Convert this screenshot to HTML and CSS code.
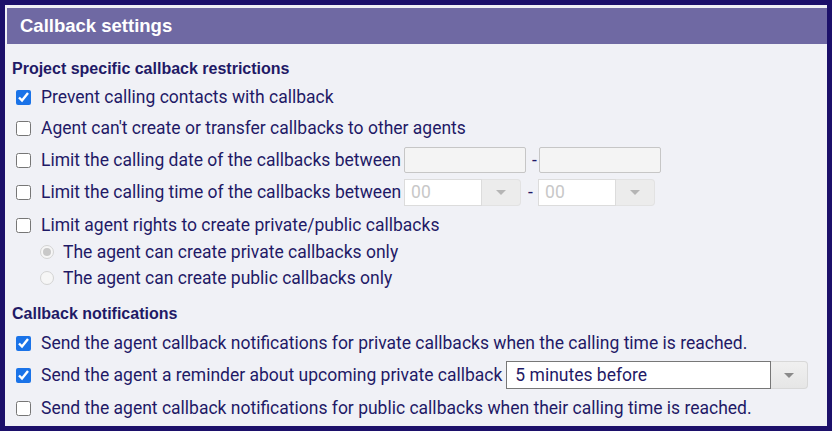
FILE: index.html
```html
<!DOCTYPE html>
<html>
<head>
<meta charset="utf-8">
<link rel="stylesheet" href="styles.css">
</head>
<body>
<div class="panel">
  <div class="header">Callback settings</div>
  <div class="body">
    <div class="section-title h1">Project specific callback restrictions</div>
    <label class="row r1"><input type="checkbox" checked><span>Prevent calling contacts with callback</span></label>
    <label class="row r2"><input type="checkbox"><span>Agent can't create or transfer callbacks to other agents</span></label>
    <div class="row r3"><input type="checkbox"><span>Limit the calling date of the callbacks between</span>
      <span class="date"></span><span class="dash">-</span><span class="date"></span></div>
    <div class="row r4"><input type="checkbox"><span>Limit the calling time of the callbacks between</span>
      <span class="sel sel-time dis"><span class="val">00</span><span class="btn"><i class="caret"></i></span></span>
      <span class="dash">-</span>
      <span class="sel sel-time dis"><span class="val">00</span><span class="btn"><i class="caret"></i></span></span>
    </div>
    <label class="row r5"><input type="checkbox"><span>Limit agent rights to create private/public callbacks</span></label>
    <div class="row radio rad1"><span class="rb checked"></span><span>The agent can create private callbacks only</span></div>
    <div class="row radio rad2"><span class="rb"></span><span>The agent can create public callbacks only</span></div>
    <div class="section-title h2">Callback notifications</div>
    <label class="row s1"><input type="checkbox" checked><span>Send the agent callback notifications for private callbacks when the calling time is reached.</span></label>
    <div class="row s2"><input type="checkbox" checked><span>Send the agent a reminder about upcoming private callback</span>
      <span class="sel sel-rem"><span class="val">5 minutes before</span><span class="btn"><i class="caret"></i></span></span>
    </div>
    <label class="row s3"><input type="checkbox"><span>Send the agent callback notifications for public callbacks when their calling time is reached.</span></label>
  </div>
</div>
</body>
</html>
```
FILE: styles.css
```css
* { box-sizing: border-box; }
html, body { margin: 0; padding: 0; }
body {
  background: #1c106a;
  width: 832px;
  height: 431px;
  overflow: hidden;
  padding: 5px 5px 5px 5px;
  font-family: Roboto, "Liberation Sans", sans-serif;
  color: #1f1a66;
}
.panel {
  background: #f0f1f6;
  height: 421px;
  padding: 3px 0 0 2px;
}
.header {
  height: 36px;
  background: #6f69a3;
  color: #ffffff;
  font-family: "Liberation Sans", Arial, sans-serif;
  font-weight: bold;
  font-size: 18.5px;
  line-height: 36px;
  padding-left: 13px;
}
.body { padding-left: 0; }
.section-title {
  font-family: "Liberation Sans", Arial, sans-serif;
  font-weight: bold;
  font-size: 16px;
  display: flex;
  align-items: center;
  padding-left: 5px;
}
.h1 { height: 26px; margin-top: 12px; }
.h2 { height: 28px; margin-top: 9px; }
.row {
  display: flex;
  align-items: center;
  font-size: 17.5px;
  padding-left: 9px;
  white-space: nowrap;
}
.row input[type=checkbox] {
  width: 15px;
  height: 15px;
  margin: 0 10px 0 0;
  accent-color: #1a73e8;
}
.r1 { height: 30px; }
.r2 { height: 32px; }
.r3 { height: 32px; }
.r4 { height: 32px; }
.r5 { height: 28px; margin-top: 3px; }
.radio { height: 26px; padding-left: 33px; }
.s1 { height: 30px; }
.s2 { height: 34px; }
.s3 { height: 32px; }
.rb {
  width: 14px; height: 14px;
  border-radius: 50%;
  border: 1px solid #d3d3d3;
  background: #f6f6f6;
  margin-right: 9px;
  display: inline-block;
  position: relative;
}
.rb.checked::after {
  content: "";
  position: absolute;
  left: 2px; top: 2px;
  width: 8px; height: 8px;
  border-radius: 50%;
  background: #c8c8c8;
}
.date {
  display: inline-block;
  width: 122px;
  height: 26px;
  margin-left: 3px;
  border: 1px solid #c6c6c6;
  border-radius: 2px;
  background: #f4f4f4;
}
.date + .dash { margin: 0 0 0 6px; width: 7px; }
.date + .dash + .date { margin-left: 0; }
.sel { display: inline-flex; height: 27px; margin-left: 3px; }
.sel .val {
  background: #fff;
  border: 1px solid #dcdcdc;
  display: flex;
  align-items: center;
  padding-left: 6px;
}
.sel .btn {
  background: #ececec;
  border: 1px solid #e2e2e2;
  border-left: none;
  border-radius: 0 4px 4px 0;
  display: flex;
  align-items: center;
  justify-content: center;
}
.caret {
  width: 0; height: 0;
  border-left: 5px solid transparent;
  border-right: 5px solid transparent;
  border-top: 5px solid #b5b5b5;
}
.sel-time .val { width: 78px; color: #c8c8c8; }
.sel-time .btn { width: 39px; }
.sel-time + .dash { margin: 0 0 0 7px; width: 10px; }
.sel-time + .dash + .sel { margin-left: 0; }
.sel-rem { height: 28px; margin-left: 4px; }
.sel-rem .val { width: 265px; border-color: #777; color: #1f1a66; padding-left: 8px; }
.sel-rem .btn { width: 37px; background: linear-gradient(#f0f0f0, #e6e6e6); border-color: #d8d8d8; }
.sel-rem .caret { border-top-color: #8a8a8a; }
```
